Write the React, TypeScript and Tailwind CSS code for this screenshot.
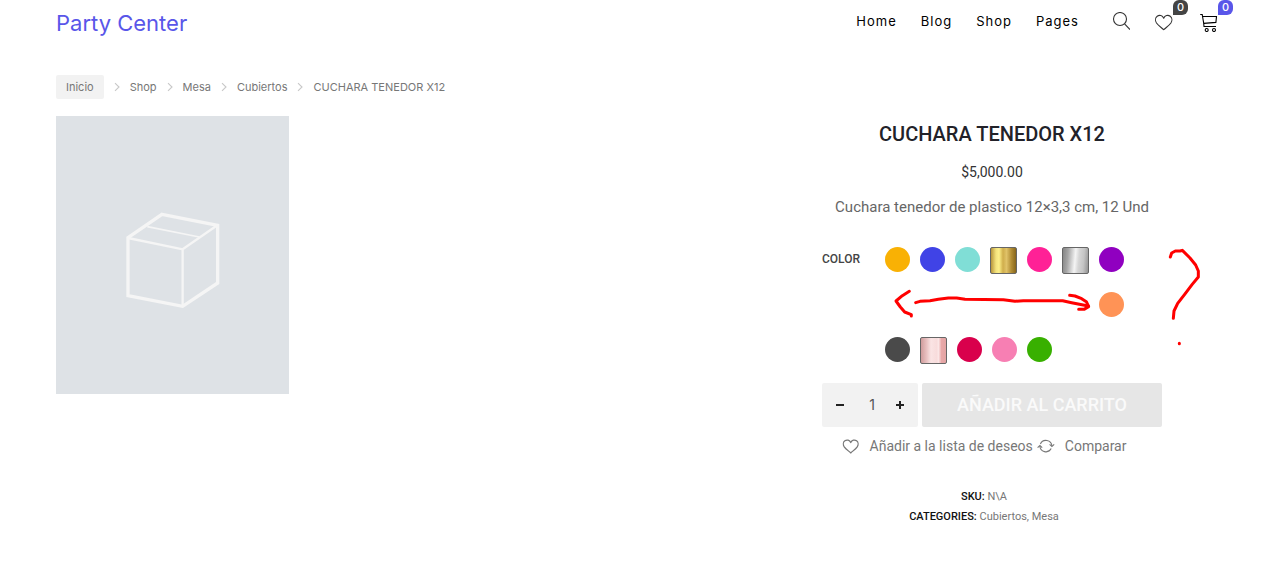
import React, { useState } from 'react';

interface Swatch {
  name: string;
  className: string;
  square?: boolean;
}

const NAV_LINKS = ['Home', 'Blog', 'Shop', 'Pages'];

const BREADCRUMBS = ['Shop', 'Mesa', 'Cubiertos'];

const SWATCH_ROWS: { align: string; items: Swatch[] }[] = [
  {
    align: 'justify-start',
    items: [
      { name: 'Amarillo', className: 'bg-[#f9b104]' },
      { name: 'Azul', className: 'bg-[#4043e6]' },
      { name: 'Aguamarina', className: 'bg-[#80ded6]' },
      { name: 'Dorado', square: true, className: 'bg-[linear-gradient(90deg,#b8963c,#f3e27c_20%,#fdf08a_32%,#d0ae4c_48%,#e0c268_62%,#b08c34_82%,#86661c)]' },
      { name: 'Fucsia', className: 'bg-[#ff2196]' },
      { name: 'Plateado', square: true, className: 'bg-[linear-gradient(95deg,#858585,#a5a5a5_20%,#d8d8d8_38%,#f4f4f4_48%,#d5d5d5_62%,#c4c4c4_80%,#929292)]' },
      { name: 'Morado', className: 'bg-[#9000c0]' },
    ],
  },
  {
    align: 'justify-end',
    items: [{ name: 'Naranja', className: 'bg-[#ff9356]' }],
  },
  {
    align: 'justify-start',
    items: [
      { name: 'Negro', className: 'bg-[#4a4a4a]' },
      { name: 'Oro rosa', square: true, className: 'bg-[linear-gradient(90deg,#d09c9c,#e8c0c0_22%,#fae4e4_40%,#f8dcdc_62%,#fbe6e6_70%,#e8a8a8_82%,#e4a4a4)]' },
      { name: 'Rojo', className: 'bg-[#d9004c]' },
      { name: 'Rosa', className: 'bg-[#f77fb3]' },
      { name: 'Verde', className: 'bg-[#38b000]' },
    ],
  },
];

const HeartIcon: React.FC<{ className?: string }> = ({ className }) => (
  <svg viewBox="0 0 20 20" className={className} fill="none" stroke="currentColor" strokeWidth="1.1" strokeLinejoin="round">
    <path d="M9.7 17.7C8 16 4.3 13.6 2.5 11C1 8.6 1.2 5.6 3.2 4.2C5.4 2.6 8.5 3.4 9.7 6.2C10.9 3.4 14 2.6 16.2 4.2C18.2 5.6 18.4 8.6 16.9 11C15.1 13.6 11.4 16 9.7 17.7Z" />
  </svg>
);

const SearchIcon = () => (
  <svg viewBox="0 0 20 20" className="size-5" fill="none" stroke="currentColor" strokeWidth="1.1">
    <circle cx="10" cy="7" r="6.5" />
    <path d="M14.6 11.8L20 17.6" />
  </svg>
);

const CartIcon = () => (
  <svg viewBox="0 0 20 20" className="size-5" fill="none" stroke="currentColor" strokeWidth="1.1">
    <path d="M2.2 2.5H4.2L5.7 11.2L6 14.5H18" />
    <path d="M4.4 4.5H18.5L17.9 10.4L5.8 11.4" />
    <circle cx="8.7" cy="18" r="1.5" />
    <circle cx="16" cy="18" r="1.5" />
  </svg>
);

const CompareIcon = () => (
  <svg viewBox="0 0 18 18" className="size-[18px]" fill="none" stroke="currentColor" strokeWidth="1.1">
    <path d="M3.4 7A6 6 0 0 1 14.9 9" />
    <path d="M14.2 11.6A6 6 0 0 1 2.9 9" />
    <path d="M12.6 7.4L14.9 9.5L17.2 7.4" />
    <path d="M0.6 10.6L2.9 8.5L5.2 10.6" />
  </svg>
);

const Chevron = () => (
  <svg viewBox="0 0 6 10" className="h-2.5 w-1.5" fill="none" stroke="#c8c8c8" strokeWidth="1.1">
    <path d="M1 1.2L5 5L1 8.8" />
  </svg>
);

// Imagen por defecto cuando el producto no tiene foto
const ProductPlaceholder = () => (
  <svg viewBox="0 0 233 278" className="w-[233px] shrink-0 self-start bg-[#dee2e6]" role="img" aria-label="Sin imagen">
    <g transform="translate(54 84) scale(0.3333)" fill="none" stroke="#f5f5f5">
      <path d="M156 43L323 76V249L218 319L54 287V113Z" strokeWidth="10" />
      <path d="M54 114L218 148L322 76" strokeWidth="7" />
      <path d="M218 148V318" strokeWidth="7" />
      <path d="M112 80L268 111" strokeWidth="5" />
    </g>
  </svg>
);

// Anotaciones a mano: flecha doble y signo de pregunta
const Annotations = () => (
  <svg
    viewBox="0 0 1200 420"
    className="pointer-events-none absolute -top-3 -left-3 h-[140px] w-[400px]"
    fill="none"
    stroke="#ff0000"
    strokeWidth="9"
    strokeLinecap="round"
    strokeLinejoin="round"
    aria-hidden="true"
  >
    <path d="M298 169L277 182L258 198L271 216L284 231L304 239V243" />
    <path d="M317 203L330 199L360 197L385 193L415 189L440 189L465 193L580 194L615 199L640 197L758 197L785 203L835 213" />
    <path d="M779 181L795 183L815 191L829 200L836 215L822 223L806 223" />
    <path d="M1081 66L1085 54L1096 48L1110 48L1117 46L1140 69L1157 90L1165 108V126L1146 149L1124 178L1103 205L1092 228L1090 250" />
    <path d="M1108 325V326" />
  </svg>
);

const App: React.FC = () => {
  const [quantity, setQuantity] = useState(1);
  const [color, setColor] = useState('');

  return (
    <div className="min-h-screen bg-white px-14 font-['Roboto','Liberation_Sans',sans-serif] text-[#777777]">
      <header className="flex h-11 items-center justify-between font-['Inter','Liberation_Sans',sans-serif]">
        <a href="#" className="pt-0.5 text-[22px] leading-8 text-[#5956e9]">Party Center</a>
        <div className="flex items-center gap-[31px] pr-3">
          <nav className="flex gap-6 text-[13px] text-black">
            {NAV_LINKS.map(link => (
              <a key={link} href="#" className="tracking-[1px]">{link}</a>
            ))}
          </nav>
          <div className="flex gap-6 text-[#333333]">
            <button type="button" aria-label="Buscar"><SearchIcon /></button>
            <button type="button" aria-label="Lista de deseos" className="relative">
              <HeartIcon className="size-5" />
              <span className="absolute -top-3 left-[19px] flex size-[15px] items-center justify-center rounded-md rounded-bl-none bg-[#444444] text-[11px] font-medium text-white">0</span>
            </button>
            <button type="button" aria-label="Carrito" className="relative text-black">
              <CartIcon />
              <span className="absolute -top-3 left-5 flex size-[15px] items-center justify-center rounded-md rounded-bl-none bg-[#5956e9] text-[11px] font-medium text-white">0</span>
            </button>
          </div>
        </div>
      </header>

      <nav className="mt-[31px] flex items-center gap-2.5 font-['Inter','Liberation_Sans',sans-serif] text-[11px]" aria-label="Ruta">
        <a href="#" className="rounded-xs bg-[#f2f2f2] px-2.5 leading-6">Inicio</a>
        {BREADCRUMBS.map(item => (
          <React.Fragment key={item}>
            <Chevron />
            <a href="#">{item}</a>
          </React.Fragment>
        ))}
        <Chevron />
        <span>CUCHARA TENEDOR X12</span>
      </nav>

      <main className="mt-[17px] flex justify-between">
        <ProductPlaceholder />

        <section className="flex w-[476px] flex-col items-center">
          <h1 className="pt-0.5 text-xl leading-8 font-medium text-[#222229]">CUCHARA TENEDOR X12</h1>
          <p className="mt-2.5 text-sm leading-6 text-[#333333]">$5,000.00</p>
          <p className="mt-[11px] text-[15px] leading-6 text-[#666666]">Cuchara tenedor de plastico 12×3,3 cm, 12 Und</p>

          <form className="mt-7 w-[340px]" onSubmit={e => e.preventDefault()}>
            <div className="relative flex">
              <span id="color-label" className="w-[63px] text-xs leading-6 font-medium text-[#444444]">COLOR</span>
              <div className="flex w-[239px] flex-col gap-[18px]" role="group" aria-labelledby="color-label">
                {SWATCH_ROWS.map((row, i) => (
                  <div key={i} className={`flex h-[27px] items-start gap-2.5 ${row.align}`}>
                    {row.items.map(s => (
                      <button
                        key={s.name}
                        type="button"
                        aria-label={s.name}
                        aria-pressed={color === s.name}
                        onClick={() => setColor(s.name)}
                        className={`${s.square ? 'size-[27px] rounded-xs border border-[#666666]' : 'size-[25px] rounded-full'} ${s.className}`}
                      />
                    ))}
                  </div>
                ))}
              </div>
              <Annotations />
            </div>

            <div className="mt-[19px] flex h-11 gap-1">
              <div className="flex w-24 rounded-xs bg-[#f2f2f2] text-[#222222]">
                <button type="button" aria-label="Menos" className="flex w-9 items-center justify-center" onClick={() => setQuantity(q => Math.max(1, q - 1))}>
                  <svg viewBox="0 0 8 8" className="size-2" stroke="currentColor" strokeWidth="2"><path d="M0 4H8" /></svg>
                </button>
                <input
                  aria-label="Cantidad"
                  value={quantity}
                  onChange={e => setQuantity(Number(e.target.value) || 1)}
                  className="w-6 pl-1 text-center font-['Inter','Liberation_Sans',sans-serif] text-sm text-[#555555] outline-none"
                />
                <button type="button" aria-label="Más" className="flex w-9 items-center justify-center" onClick={() => setQuantity(q => q + 1)}>
                  <svg viewBox="0 0 8 8" className="size-2" stroke="currentColor" strokeWidth="2"><path d="M0 4H8M4 0V8" /></svg>
                </button>
              </div>
              <button type="submit" className="flex-1 rounded-xs bg-[#e6e6e6] text-lg font-medium text-[#fafafa]">AÑADIR AL CARRITO</button>
            </div>
          </form>

          <div className="mt-[7px] flex gap-1 pr-4 text-sm leading-6">
            <a href="#" className="flex items-center gap-2.5"><HeartIcon className="size-[18px] stroke-[1.4]" />Añadir a la lista de deseos</a>
            <a href="#" className="flex items-center gap-2.5"><CompareIcon />Comparar</a>
          </div>

          <div className="mt-7 pt-px pr-4 text-center text-[11px] leading-5">
            <p><span className="font-medium text-[#111111]">SKU:</span> N\A</p>
            <p>
              <span className="font-medium text-[#111111]">CATEGORIES:</span> <a href="#">Cubiertos</a>, <a href="#">Mesa</a>
            </p>
          </div>
        </section>
      </main>
    </div>
  );
};

export default App;
